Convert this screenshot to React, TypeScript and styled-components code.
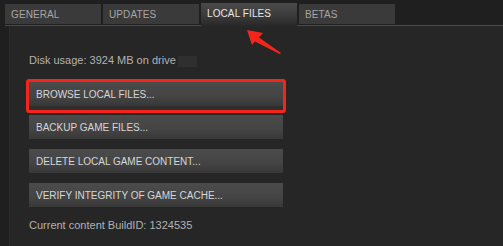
import React from "react";
import styled, { createGlobalStyle } from "styled-components";

const GlobalStyle = createGlobalStyle`
  html, body {
    margin: 0;
    padding: 0;
    background: #1f1f1f;
  }
  body {
    font-family: "Liberation Sans", Arial, sans-serif;
  }
`;

const Window = styled.div`
  position: relative;
  width: 503px;
  height: 246px;
  overflow: hidden;
  background: #1f1f1f;
  display: flex;
  flex-direction: column;
`;

const TabBar = styled.div`
  display: flex;
  align-items: flex-start;
  gap: 2px;
  margin-left: 5px;
  padding-top: 4px;
  height: 21px;
  border-bottom: 1px solid #4a4a4a;
  position: relative;
  z-index: 1;
`;

const Tab = styled.div<{ $active?: boolean }>`
  box-sizing: border-box;
  width: 96px;
  height: ${(p) => (p.$active ? "24px" : "20px")};
  margin-top: ${(p) => (p.$active ? "-1px" : "0")};
  padding-left: 6px;
  display: flex;
  align-items: center;
  padding-bottom: ${(p) => (p.$active ? "4px" : "0")};
  font-size: 10px;
  letter-spacing: 0.1px;
  color: ${(p) => (p.$active ? "#e6e6e6" : "#a6a6a6")};
  background: ${(p) =>
    p.$active
      ? "linear-gradient(to bottom, #4a4a4a 0%, #3a3a3a 55%, #262626 100%)"
      : "#3a3a3a"};
`;

const Panel = styled.div`
  flex: 1;
  margin-left: 9px;
  border-left: 1px solid #2c2c2c;
  background: #262626;
  padding: 27px 0 0 19px;
  display: flex;
  flex-direction: column;
  align-items: flex-start;
`;

const InfoText = styled.div<{ $top?: number }>`
  font-size: 11px;
  line-height: 13px;
  color: #b2b2b2;
  margin-top: ${(p) => p.$top ?? 0}px;
  display: flex;
  align-items: center;
`;

const Redacted = styled.span`
  display: inline-block;
  width: 19px;
  height: 11px;
  margin-left: 2px;
  margin-top: 3px;
  background: #2f2f2f;
`;

const Highlight = styled.div`
  margin-top: 12px;
  margin-left: -3px;
  border: 3px solid #f4261c;
  border-radius: 3px;
  padding-bottom: 4px;
  background: #2e2e2e;
`;

const ActionButton = styled.div<{ $top?: number }>`
  box-sizing: border-box;
  width: 254px;
  height: 24px;
  margin-top: ${(p) => p.$top ?? 0}px;
  padding-left: 7px;
  display: flex;
  align-items: center;
  font-size: 10px;
  color: #d6d6d6;
  background: linear-gradient(to bottom, #4b4b4b 0%, #444444 60%, #383838 100%);
`;

const Arrow = styled.svg`
  position: absolute;
  left: 0;
  top: 0;
  pointer-events: none;
  z-index: 2;
`;

export default function App() {
  return (
    <>
      <GlobalStyle />
      <Window>
        <TabBar>
          <Tab>GENERAL</Tab>
          <Tab>UPDATES</Tab>
          <Tab $active>LOCAL FILES</Tab>
          <Tab>BETAS</Tab>
        </TabBar>
        <Panel>
          <InfoText>
            Disk usage: 3924 MB on drive
            <Redacted />
          </InfoText>
          <Highlight>
            <ActionButton>BROWSE LOCAL FILES...</ActionButton>
          </Highlight>
          <ActionButton $top={2}>BACKUP GAME FILES...</ActionButton>
          <ActionButton $top={10}>DELETE LOCAL GAME CONTENT...</ActionButton>
          <ActionButton $top={10}>VERIFY INTEGRITY OF GAME CACHE...</ActionButton>
          <InfoText $top={12}>Current content BuildID: 1324535</InfoText>
        </Panel>
        <Arrow width="503" height="246" viewBox="0 0 503 246">
          <polygon
            points="247,30 263,33 259,37.5 281,53 279.5,54 255,41.5 252,45"
            fill="#f4261c"
          />
        </Arrow>
      </Window>
    </>
  );
}
